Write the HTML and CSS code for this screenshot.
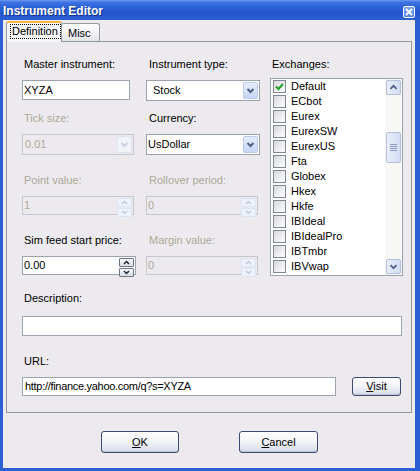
FILE: index.html
```html
<!DOCTYPE html>
<html>
<head>
<meta charset="utf-8">
<title>Instrument Editor</title>
<link rel="stylesheet" href="styles.css">
</head>
<body>
<div class="window">
  <div class="titlebar">
    <span class="title">Instrument Editor</span>
    <span class="close"><svg width="10" height="10" viewBox="0 0 10 10"><path d="M2 2 L8 8 M8 2 L2 8" stroke="#fff" stroke-width="2" fill="none"/></svg></span>
  </div>
  <div class="frame">
    <div class="tabs">
      <div class="tab active"><span class="focus">Definition</span></div>
      <div class="tab misc">Misc</div>
    </div>
    <div class="panel">
      <div class="grid">
        <div class="field">
          <label class="lbl">Master instrument:</label>
          <div class="text w108"><span class="val">XYZA</span></div>
        </div>
        <div class="field c2">
          <label class="lbl">Instrument type:</label>
          <div class="combo w114"><span class="val p5">Stock</span><span class="cbtn"><svg width="13" height="17" viewBox="0 0 13 17"><path d="M3.5 7 L6.5 10 L9.5 7" stroke="#4d6185" stroke-width="2" fill="none"/></svg></span></div>
        </div>
        <div class="field c3 exch">
          <label class="lbl">Exchanges:</label>
          <div class="list">
            <div class="items">
              <div class="item"><span class="cb checked"><svg width="11" height="11" viewBox="0 0 11 11"><path d="M2 5.5 L4.5 8 L9 3" stroke="#21a121" stroke-width="2" fill="none"/></svg></span>Default</div>
              <div class="item"><span class="cb"></span>ECbot</div>
              <div class="item"><span class="cb"></span>Eurex</div>
              <div class="item"><span class="cb"></span>EurexSW</div>
              <div class="item"><span class="cb"></span>EurexUS</div>
              <div class="item"><span class="cb"></span>Fta</div>
              <div class="item"><span class="cb"></span>Globex</div>
              <div class="item"><span class="cb"></span>Hkex</div>
              <div class="item"><span class="cb"></span>Hkfe</div>
              <div class="item"><span class="cb"></span>IBIdeal</div>
              <div class="item"><span class="cb"></span>IBIdealPro</div>
              <div class="item"><span class="cb"></span>IBTmbr</div>
              <div class="item"><span class="cb"></span>IBVwap</div>
            </div>
            <div class="scrollbar">
              <span class="sbtn"><svg width="15" height="15" viewBox="0 0 15 15"><path d="M4 9 L7.5 5.5 L11 9" stroke="#4d6185" stroke-width="2" fill="none"/></svg></span>
              <span class="thumb"><svg width="9" height="8" viewBox="0 0 9 8"><path d="M1 0.5 H8 M1 2.5 H8 M1 4.5 H8 M1 6.5 H8" stroke="#8c9dc4" stroke-width="1"/></svg></span>
              <span class="sfill"></span>
              <span class="sbtn"><svg width="15" height="15" viewBox="0 0 15 15"><path d="M4 6 L7.5 9.5 L11 6" stroke="#4d6185" stroke-width="2" fill="none"/></svg></span>
            </div>
          </div>
        </div>

        <div class="field">
          <label class="lbl dis">Tick size:</label>
          <div class="combo w112 disabled"><span class="val p2">0.01</span><span class="cbtn"><svg width="13" height="17" viewBox="0 0 13 17"><path d="M3.5 7 L6.5 10 L9.5 7" stroke="#c9cfdc" stroke-width="2" fill="none"/></svg></span></div>
        </div>
        <div class="field c2">
          <label class="lbl">Currency:</label>
          <div class="combo w114"><span class="val p1">UsDollar</span><span class="cbtn"><svg width="13" height="17" viewBox="0 0 13 17"><path d="M3.5 7 L6.5 10 L9.5 7" stroke="#4d6185" stroke-width="2" fill="none"/></svg></span></div>
        </div>

        <div class="field">
          <label class="lbl dis">Point value:</label>
          <div class="spin w112 disabled"><span class="val">1</span><span class="sbtns"><span class="ub"><svg width="11" height="7" viewBox="0 0 11 7"><path d="M3 5 L5.5 2.5 L8 5" stroke="#c3cbdb" stroke-width="1.5" fill="none"/></svg></span><span class="ub"><svg width="11" height="7" viewBox="0 0 11 7"><path d="M3 2 L5.5 4.5 L8 2" stroke="#c3cbdb" stroke-width="1.5" fill="none"/></svg></span></span></div>
        </div>
        <div class="field c2">
          <label class="lbl dis">Rollover period:</label>
          <div class="spin w112 disabled"><span class="val">0</span><span class="sbtns"><span class="ub"><svg width="11" height="7" viewBox="0 0 11 7"><path d="M3 5 L5.5 2.5 L8 5" stroke="#c3cbdb" stroke-width="1.5" fill="none"/></svg></span><span class="ub"><svg width="11" height="7" viewBox="0 0 11 7"><path d="M3 2 L5.5 4.5 L8 2" stroke="#c3cbdb" stroke-width="1.5" fill="none"/></svg></span></span></div>
        </div>

        <div class="field">
          <label class="lbl">Sim feed start price:</label>
          <div class="spin w114"><span class="val">0.00</span><span class="sbtns on"><span class="ub"><svg width="11" height="7" viewBox="0 0 11 7"><path d="M3 5 L5.5 2.5 L8 5" stroke="#1e2a3c" stroke-width="1.5" fill="none"/></svg></span><span class="ub"><svg width="11" height="7" viewBox="0 0 11 7"><path d="M3 2 L5.5 4.5 L8 2" stroke="#1e2a3c" stroke-width="1.5" fill="none"/></svg></span></span></div>
        </div>
        <div class="field c2">
          <label class="lbl dis">Margin value:</label>
          <div class="spin w112 disabled"><span class="val">0</span><span class="sbtns"><span class="ub"><svg width="11" height="7" viewBox="0 0 11 7"><path d="M3 5 L5.5 2.5 L8 5" stroke="#c3cbdb" stroke-width="1.5" fill="none"/></svg></span><span class="ub"><svg width="11" height="7" viewBox="0 0 11 7"><path d="M3 2 L5.5 4.5 L8 2" stroke="#c3cbdb" stroke-width="1.5" fill="none"/></svg></span></span></div>
        </div>
      </div>

      <div class="block desc">
        <label class="lbl">Description:</label>
        <div class="text w380"></div>
      </div>
      <div class="block url">
        <label class="lbl">URL:</label>
        <div class="urlrow">
          <div class="text w314 h19"><span class="val p2 tight">http://finance.yahoo.com/q?s=XYZA</span></div>
          <button class="btn visit"><u>V</u>isit</button>
        </div>
      </div>
    </div>
    <div class="buttons">
      <button class="btn ok"><u>O</u>K</button>
      <button class="btn cancel"><u>C</u>ancel</button>
    </div>
  </div>
</div>
</body>
</html>
```

FILE: styles.css
```css
* { box-sizing: border-box; }
html, body { margin: 0; padding: 0; }
body {
  width: 420px;
  height: 471px;
  overflow: hidden;
  font-family: "Liberation Sans", Arial, sans-serif;
  font-size: 11px;
  color: #000;
  background: #2c5ed4;
}
.window { width: 420px; height: 471px; display: flex; flex-direction: column; }

.titlebar {
  height: 20px;
  flex: none;
  display: flex;
  align-items: flex-start;
  justify-content: space-between;
  padding: 0 5px 0 3px;
  background: linear-gradient(#6f9cf2 0, #3f75e2 2px, #2d62d8 7px, #2656cc 13px, #2b5fd3 20px);
  color: #fff;
}
.title {
  font-weight: bold;
  font-size: 12px;
  line-height: 14px;
  margin-top: 4px;
  text-shadow: 1px 1px 0 #12338f;
}
.close {
  margin-top: 6px;
  width: 12px;
  height: 12px;
  border: 1px solid #fff;
  border-radius: 2px;
  background: linear-gradient(#7aa4f5, #4c7fe6);
  display: flex;
  align-items: center;
  justify-content: center;
}
.close svg { display: block; }

.frame {
  flex: 1;
  display: flex;
  flex-direction: column;
  background: #eceaee;
  border-left: 3px solid #2c5ed4;
  border-right: 5px solid #2c5ed4;
  border-bottom: 3px solid #2c5ed4;
}

.tabs {
  height: 21px;
  flex: none;
  display: flex;
  align-items: flex-start;
  padding: 1px 0 0 3px;
  position: relative;
  z-index: 1;
}
.tab {
  height: 18px;
  margin-top: 2px;
  border: 1px solid #919b9c;
  border-bottom: none;
  border-radius: 3px 3px 0 0;
  background: linear-gradient(#ffffff, #f3f3f6 50%, #e3e3ea);
  line-height: 13px;
}
.tab.misc { width: 39px; padding: 3px 0 0 6px; margin-left: -1px; }
.tab.active {
  width: 56px;
  height: 21px;
  margin-top: 0;
  border-top: 2px solid #f6b43f;
  background: #f6f5f7;
  padding-top: 1px;
}
.focus {
  display: block;
  margin-left: 3px;
  width: 51px;
  height: 15px;
  border: 1px dotted #000;
  padding-left: 1px;
  line-height: 13px;
}

.panel {
  height: 372px;
  flex: none;
  margin: 0 3px;
  border: 1px solid #919b9c;
  padding: 16px 9px 0 15px;
}

.grid {
  display: grid;
  grid-template-columns: 124px 124px 133px;
  grid-template-rows: 54px 62px 60px auto;
}
.field { display: flex; flex-direction: column; align-items: flex-start; grid-column: 1; }
.field.c2 { grid-column: 2; }
.field.c3 { grid-column: 3; }
.exch { grid-row: 1 / span 4; }

.lbl { display: block; line-height: 13px; padding-left: 2px; margin-bottom: 9px; white-space: nowrap; }
.c2 .lbl { padding-left: 3px; }
.lbl.dis { color: #aca899; }
.exch .lbl { margin-bottom: 7px; }

.text, .combo, .spin {
  display: flex;
  align-items: center;
  background: #fff;
  border: 1px solid #9aa3ae;
}
.text { height: 20px; padding-left: 1px; }
.val { line-height: 13px; white-space: nowrap; }
.tight { letter-spacing: -0.3px; }
.p1 { padding-left: 0; }
.p2 { padding-left: 1px; }
.p5 { padding-left: 5px; }
.w108 { width: 108px; }
.w112 { width: 112px; }
.w114 { width: 114px; }
.w380 { width: 380px; }
.w314 { width: 314px; }
.h19 { height: 19px; }

.combo { height: 21px; padding: 1px; justify-content: space-between; }
.combo .val { flex: 1; }
.cbtn {
  width: 15px;
  height: 17px;
  border: 1px solid #bccbed;
  border-radius: 2px;
  background: linear-gradient(#e6eefc, #c7d6f7);
  display: flex;
  align-items: center;
  justify-content: center;
}
.cbtn svg { display: block; }

.disabled { background: #eceaee; border-color: #c5c7cc; color: #aca899; }
.disabled .cbtn { border-color: #dde3ef; background: #f1f3f8; }

.spin { height: 19px; padding: 1px; justify-content: space-between; }
.spin .val { flex: 1; padding-left: 0; }
.sbtns { display: flex; flex-direction: column; width: 15px; height: 15px; gap: 1px; }
.ub {
  flex: 1;
  display: flex;
  align-items: center;
  justify-content: center;
  border: 1px solid #dde4f1;
  border-radius: 1px;
  background: #eef2fb;
}
.ub svg { display: block; }
.sbtns.on .ub { border-color: #6f7782; background: linear-gradient(#f6f7f9, #d9dce3); }

.list {
  width: 133px;
  height: 198px;
  background: #fff;
  border: 1px solid #9aa3ae;
  display: flex;
}
.items { flex: 1; }
.item { height: 15px; display: flex; align-items: center; padding-left: 2px; line-height: 13px; white-space: nowrap; }
.cb {
  width: 13px;
  height: 13px;
  flex: none;
  margin-right: 5px;
  border: 1px solid #7f8893;
  background: linear-gradient(135deg, #d8d8dc, #f4f4f6 70%, #fbfbfb);
  display: flex;
  align-items: center;
  justify-content: center;
}
.cb svg { display: block; }

.scrollbar {
  width: 17px;
  flex: none;
  display: flex;
  flex-direction: column;
  align-items: center;
  background: #f7f7f5;
  padding: 1px 0;
}
.sbtn, .thumb {
  width: 15px;
  border: 1px solid #b3c0dc;
  border-radius: 2px;
  background: linear-gradient(90deg, #e9eef9, #d2dcf2);
  display: flex;
  align-items: center;
  justify-content: center;
}
.sbtn { height: 15px; }
.sbtn svg { display: block; }
.thumb { height: 31px; margin-top: 37px; }
.thumb svg { display: block; }
.sfill { flex: 1; }

.desc { margin-top: 16px; }
.desc .lbl { margin-bottom: 11px; }
.url { margin-top: 19px; }
.urlrow { display: flex; align-items: center; gap: 16px; }

.btn {
  font-family: "Liberation Sans", Arial, sans-serif;
  font-size: 11px;
  color: #000;
  padding: 0;
  border: 1px solid #3c4a6e;
  border-radius: 3px;
  background: linear-gradient(#ffffff, #f4f5f9 45%, #dfe3ee 85%, #c9d0e0);
  box-shadow: inset 0 -1px 0 #c0c8da;
  line-height: 13px;
}
.visit { width: 49px; height: 19px; }

.buttons {
  display: flex;
  gap: 60px;
  padding-left: 98px;
  margin-top: 18px;
}
.ok { width: 78px; height: 22px; }
.cancel { width: 79px; height: 22px; }
```
